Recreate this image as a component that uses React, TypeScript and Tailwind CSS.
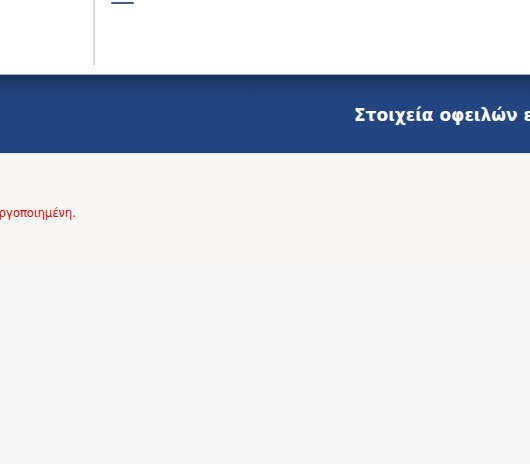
export default function App() {
  return (
    <div className="w-[530px] h-[464px] overflow-hidden bg-[#f7f7f7] flex flex-col" style={{ fontFamily: '"DejaVu Sans", Verdana, sans-serif' }}>
      <div className="h-[74px] bg-white flex shrink-0">
        <div className="w-[93px] shrink-0" />
        <div className="w-[2px] h-[65px] bg-[#dcdcdc] shrink-0" />
        <div className="pl-[16px] pt-[2px]">
          <div className="w-[23px] h-[2px] rounded-full bg-[#4a5a82]" />
        </div>
      </div>
      <div className="h-[1px] bg-[#a9a9a9] shrink-0" />
      <div className="h-[78px] shrink-0 bg-gradient-to-b from-[#1b3260] via-[#22457f] via-[30%] to-[#22457f] flex items-center">
        <div className="pl-[354px] pt-[2px] whitespace-nowrap text-white font-bold text-[17px] leading-none">
          Στοιχεία οφειλών ενεργών λογαριασμών
        </div>
      </div>
      <div className="h-[1px] bg-[#dfe7f1] shrink-0" />
      <div className="h-[112px] bg-[#f9f8f4] shrink-0 pt-[52px]">
        <div className="w-[76px] overflow-hidden flex justify-end">
          <div className="whitespace-nowrap text-[11.5px] text-[#e00000] leading-[14px]">
            Η υπηρεσία δεν είναι ενεργοποιημένη.
          </div>
        </div>
      </div>
      <div className="flex-1 bg-[#f7f7f7]" />
    </div>
  );
}
